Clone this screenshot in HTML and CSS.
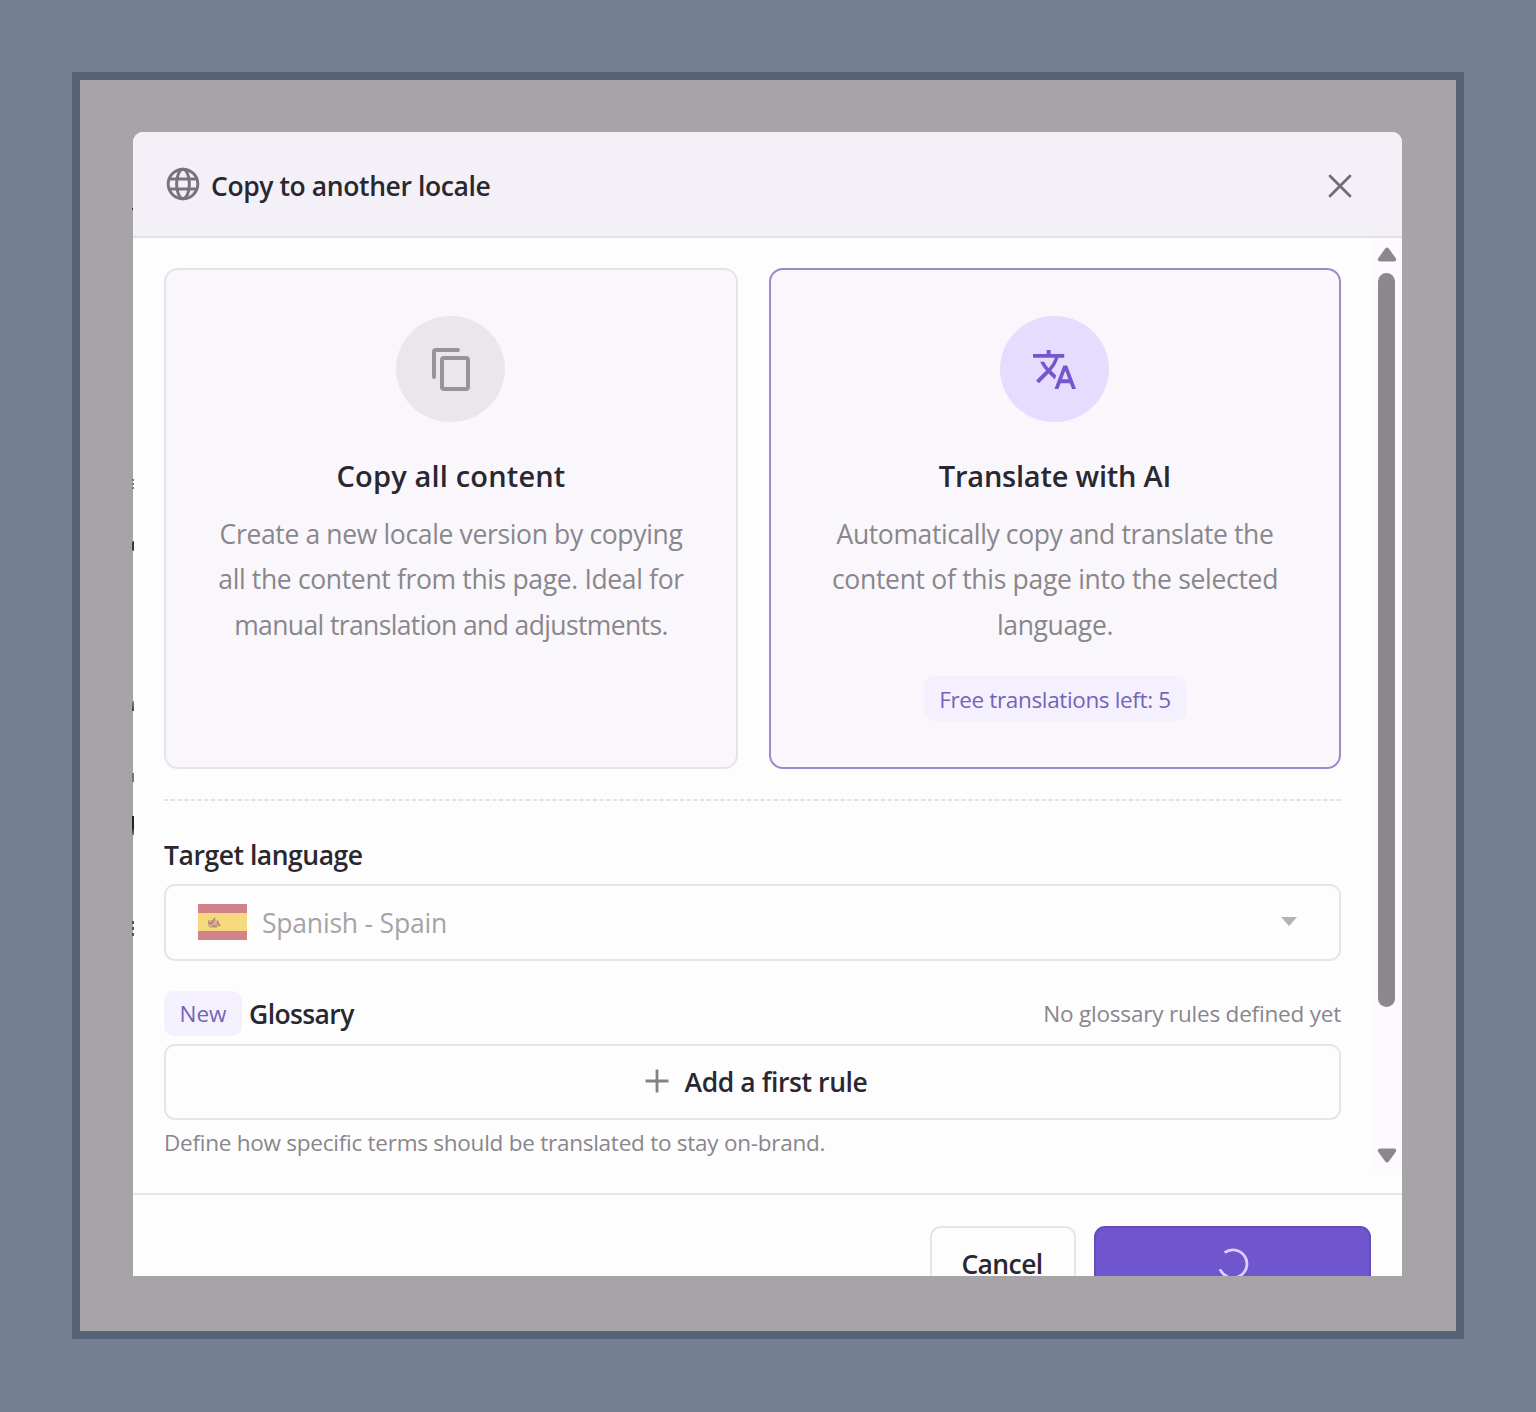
FILE: index.html
```html
<!DOCTYPE html>
<html lang="en">
<head>
<meta charset="utf-8">
<title>Copy to another locale</title>
<link rel="stylesheet" href="styles.css">
</head>
<body>
<main class="stage">
  <div class="viewport">
    <div class="page-edge" aria-hidden="true">
      <i class="speck speck-a"></i><i class="speck speck-b"></i><i class="speck speck-c"></i><i class="speck speck-d"></i><i class="speck speck-e"></i><i class="speck speck-f"></i><i class="speck speck-g"></i>
    </div>
    <section class="modal" role="dialog">
      <header class="modal-header">
        <svg class="globe" viewBox="0 0 34 34" fill="none" stroke="#77747b" stroke-width="3"><circle cx="17" cy="17" r="14.8"/><ellipse cx="17" cy="17" rx="6.4" ry="14.8"/><path d="M3.5 12h27M3.5 22h27"/></svg>
        <h1 class="modal-title">Copy to another locale</h1>
        <svg class="close" viewBox="0 0 24 24" fill="none" stroke="#716d74" stroke-width="2.8" stroke-linecap="round"><path d="M2 2l20 20M22 2L2 22"/></svg>
      </header>

      <div class="modal-body">
        <div class="content">
          <div class="options">
            <article class="option">
              <div class="option-icon">
                <svg class="copy-icon" viewBox="0 0 40 44" fill="none" stroke="#97949b" stroke-width="4" stroke-linecap="round" stroke-linejoin="round"><path d="M3 30V5a2 2 0 0 1 2-2h22"/><rect x="11" y="11" width="26" height="31" rx="2"/></svg>
              </div>
              <h2 class="option-title copy-title">Copy all content</h2>
              <p class="option-text"><span class="line l1">Create a new locale version by copying</span><span class="line l2">all the content from this page. Ideal for</span><span class="line l3">manual translation and adjustments.</span></p>
            </article>
            <article class="option selected">
              <div class="option-icon">
                <svg class="translate-icon" viewBox="1 2 22 20" preserveAspectRatio="none" fill="#7257cf"><path d="M12.87 15.07l-2.54-2.51.03-.03A17.52 17.52 0 0 0 14.07 6H17V4h-7V2H8v2H1v1.99h11.17C11.5 7.92 10.44 9.75 9 11.35 8.07 10.32 7.3 9.19 6.69 8h-2c.73 1.63 1.73 3.17 2.98 4.56l-5.09 5.02L4 19l5-5 3.11 3.11.76-2.04zM18.5 10h-2L12 22h2l1.12-3h4.75L21 22h2l-4.5-12zm-2.62 7l1.62-4.33L19.12 17h-3.24z"/></svg>
              </div>
              <h2 class="option-title ai-title">Translate with AI</h2>
              <p class="option-text"><span class="line l4">Automatically copy and translate the</span><span class="line l5">content of this page into the selected</span><span class="line l6">language.</span></p>
              <span class="badge quota">Free translations left: 5</span>
            </article>
          </div>

          <svg class="divider" viewBox="0 0 1177 2"><path d="M0 1h1177" stroke="#e3e0e6" stroke-width="2" stroke-dasharray="4.2 2.5"/></svg>

          <div class="field-label target-label">Target language</div>
          <div class="select">
            <svg class="flag" viewBox="0 0 49 36" preserveAspectRatio="none"><path fill="#d2828a" d="M0 0h49v36H0z"/><path fill="#f6d97c" d="M0 9h49v18H0z"/><path fill="#dcb083" d="M10 16h11v6l-3 2h-6l-2-2z"/><path d="M13 20l4-6m-3 8h5m-9-4l3 2m6-2l3 4" fill="none" stroke="#a8847f" stroke-width="1.6"/></svg>
            <span class="select-value">Spanish - Spain</span>
            <svg class="caret" viewBox="0 0 16 9"><path fill="#b5b2b7" d="M0 0h16L8 9z"/></svg>
          </div>

          <div class="glossary-head">
            <span class="badge new">New</span>
            <span class="field-label glossary-label">Glossary</span>
            <span class="note">No glossary rules defined yet</span>
          </div>
          <button class="button add-rule" type="button">
            <svg class="plus" viewBox="0 0 24 24"><path d="M12 .5v23M.5 12h23" stroke="#858188" stroke-width="2.8"/></svg>
            <span class="add-text">Add a first rule</span>
          </button>
          <p class="hint">Define how specific terms should be translated to stay on-brand.</p>
        </div>

        <div class="scrollbar" aria-hidden="true">
          <svg class="arrow" viewBox="0 0 20 15"><path d="M10 2.5L2.8 12.5h14.4z" fill="#8a888a" stroke="#8a888a" stroke-width="4" stroke-linejoin="round"/></svg>
          <div class="thumb"></div>
          <svg class="arrow arrow-down" viewBox="0 0 20 15"><path d="M10 12.5L2.8 2.5h14.4z" fill="#8a888a" stroke="#8a888a" stroke-width="4" stroke-linejoin="round"/></svg>
        </div>
      </div>

      <footer class="modal-footer">
        <button class="button cancel" type="button"><span class="cancel-text">Cancel</span></button>
        <button class="button submit" type="button" aria-label="Translating">
          <svg class="spinner" viewBox="0 0 32 32" fill="none" stroke="#dcd0fa" stroke-width="2.8"><path d="M7.6 4.6A14 14 0 1 1 3 21.2"/></svg>
        </button>
      </footer>
    </section>
  </div>
</main>
</body>
</html>
```
FILE: styles.css
```css
* { box-sizing: border-box; }
body {
  margin: 0;
  background: #768093;
  color: #2b2730;
  font-family: "Open Sans", "Noto Sans", sans-serif;
  font-size: 26.5px;
}
h1, h2, p { margin: 0; }
svg { display: block; flex: none; }

.stage { height: 1412px; padding: 72px 72px 73px; }
.viewport {
  position: relative;
  height: 1267px;
  border: 8px solid #586276;
  background: #a6a4a6;
  padding: 52px 54px 55px 53px;
}
.modal {
  height: 1144px;
  display: flex;
  flex-direction: column;
  overflow: hidden;
  border-radius: 10px 10px 0 0;
  background: #fefdfe;
}

/* Slivers of the page behind the dialog */
.speck { position: absolute; left: 52px; width: 2px; background: #3a373d; }
.speck-a { top: 128px; height: 2px; width: 1px; }
.speck-b { top: 399px; height: 11px; background: repeating-linear-gradient(#777 0 2px, transparent 2px 4px); }
.speck-c { top: 461px; height: 10px; border-radius: 2px 0 0 2px; }
.speck-d { top: 621px; height: 10px; background: linear-gradient(#888, #444); }
.speck-e { top: 693px; height: 9px; background: #777; }
.speck-f { top: 736px; height: 19px; background: linear-gradient(#222 60%, #777); }
.speck-g { top: 841px; height: 15px; background: repeating-linear-gradient(#555 0 3px, transparent 3px 6px); }

.modal-header {
  height: 106px;
  flex: none;
  display: flex;
  align-items: center;
  padding: 0 50px 0 33px;
  background: #f3f1f7;
  border-bottom: 2px solid #e4e1e6;
}
.globe { width: 34px; height: 34px; margin: 0 10px 0 0; }
.modal-title { margin: 3px 0 0 1px; font-size: 26.5px; font-weight: 600; line-height: 36px; white-space: nowrap; letter-spacing: -0.4px; }
.close { width: 24px; height: 24px; margin: 3px 0 0 auto; }

.modal-body { display: flex; height: 955px; flex: none; }
.content {
  width: 1239px;
  padding: 30px 31px 0;
  display: flex;
  flex-direction: column;
}
.options { display: grid; grid-template-columns: 574px 572px; gap: 31px; height: 501px; }
.option {
  display: flex;
  flex-direction: column;
  align-items: center;
  padding-top: 46px;
  border: 2px solid #e7e4e9;
  border-radius: 14px;
  background: #f9f7fb;
}
.option.selected { border-color: #9b8bca; }
.option-icon {
  width: 109px;
  height: 106px;
  margin-right: 1px;
  border-radius: 50%;
  background: #e9e7ec;
  display: grid;
  place-items: center;
}
.selected .option-icon { background: #e5dcfe; }
.copy-icon { width: 40px; height: 44px; }
.translate-icon { width: 43px; height: 39px; }
.option-title { margin-top: 34px; font-size: 29px; font-weight: 600; line-height: 40px; white-space: nowrap; }
.copy-title { letter-spacing: 0.17px; }
.ai-title { letter-spacing: -0.22px; }
.option-text { margin-top: 15.5px; color: #89868c; line-height: 45.5px; text-align: center; }
.line { display: block; white-space: nowrap; letter-spacing: -0.35px; }
.l3 { letter-spacing: -0.62px; }
.l4 { letter-spacing: -0.39px; }
.l5 { letter-spacing: -0.3px; }
.badge {
  display: flex;
  align-items: center;
  justify-content: center;
  height: 45px;
  border-radius: 10px;
  background: #f4f0fe;
  color: #7464b8;
  font-size: 22.5px;
  white-space: nowrap;
}
.quota { width: 263px; margin-top: 27.5px; padding-top: 2px; letter-spacing: -0.36px; }
.divider { width: 1177px; height: 2px; margin-top: 30px; }

.field-label { font-weight: 600; line-height: 36px; white-space: nowrap; letter-spacing: -0.46px; }
.target-label { margin-top: 36px; }
.select {
  height: 77px;
  flex: none;
  margin-top: 11px;
  padding: 0 42px 0 32px;
  display: flex;
  align-items: center;
  border: 2px solid #e8e4ea;
  border-radius: 11px;
}
.flag { width: 49px; height: 36px; margin-top: -2px; }
.select-value { margin-left: 15px; color: #a5a2a8; letter-spacing: -0.2px; }
.caret { width: 16px; height: 9px; margin: -3px 0 0 auto; }

.glossary-head { display: flex; align-items: center; height: 45px; margin-top: 30px; }
.new { width: 78px; }
.glossary-label { margin-left: 7px; padding-top: 1px; letter-spacing: -0.6px; }
.note { margin-left: auto; font-size: 22.5px; color: #89868c; white-space: nowrap; letter-spacing: -0.2px; }
.button {
  display: flex;
  align-items: center;
  justify-content: center;
  padding: 0;
  border: 2px solid #e8e4ea;
  border-radius: 11px;
  background: #fefdfe;
  color: inherit;
  font: 600 26.5px "Open Sans", "Noto Sans", sans-serif;
  letter-spacing: -0.4px;
}
.add-rule { height: 76px; flex: none; margin-top: 8px; }
.plus { width: 24px; height: 24px; margin: -3px 16px 0 7px; }
.hint { margin-top: 7px; font-size: 22.5px; line-height: 32px; color: #89868c; white-space: nowrap; letter-spacing: -0.25px; }

.scrollbar {
  width: 29px;
  height: 932px;
  padding: 9px 4px 0 4px;
  display: flex;
  flex-direction: column;
  align-items: center;
  background: #fcfafd;
}
.arrow { width: 20px; height: 15px; }
.thumb { width: 17px; height: 734px; margin-top: 11px; border-radius: 9px; background: #8a888a; }
.arrow-down { margin-top: 141px; }

.modal-footer {
  display: flex;
  justify-content: flex-end;
  gap: 18px;
  flex: none;
  height: 140px;
  padding: 31px 31px 0;
  border-top: 2px solid #e8e5ea;
}
.cancel { width: 146px; height: 76px; letter-spacing: -0.6px; }
.cancel-text { margin-right: 2px; }
.submit { width: 277px; height: 76px; border-color: #654cbb; background: #6f55ce; }
.spinner { width: 32px; height: 32px; }
```
